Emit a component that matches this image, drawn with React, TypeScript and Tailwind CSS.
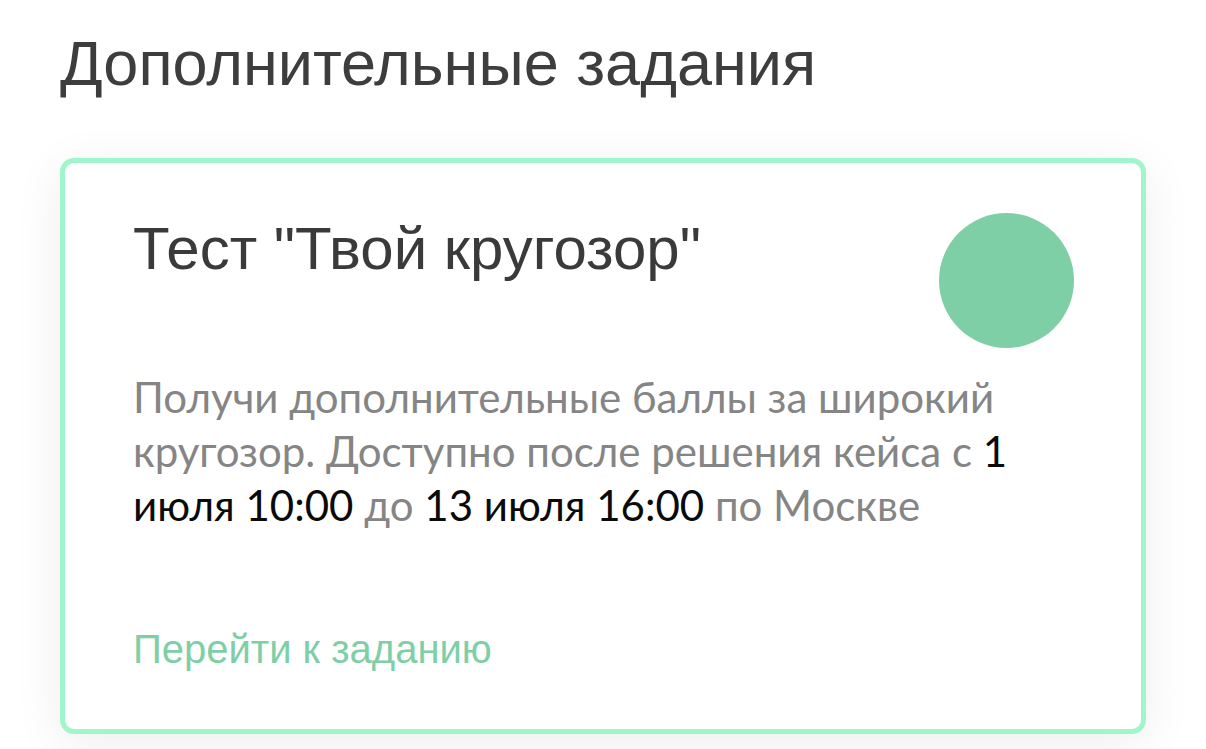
export default function App() {
  return (
    <div className="w-[1206px] h-[749px] overflow-hidden bg-white pl-[60px] pt-[26px]" style={{ fontFamily: '"Liberation Sans", Arial, sans-serif' }}>
      <h1 className="text-[63px] leading-[74px] text-[#3d3d3d] font-normal">Дополнительные задания</h1>
      <div className="mt-[58px] w-[1086px] h-[576px] rounded-[14px] border-[5px] border-[#a0f5cb] bg-white shadow-[0_10px_50px_rgba(0,0,0,0.07)] pt-[50px] pl-[68px] pr-[67px] flex flex-col">
        <div className="flex items-start justify-between">
          <div className="text-[60px] leading-[72px] text-[#3a3a3a]">Тест "Твой кругозор"</div>
          <div className="w-[135px] h-[135px] rounded-full bg-[#7ecfa5] shrink-0" />
        </div>
        <p className="mt-[22px] text-[42px] leading-[54px] text-[#858585] whitespace-nowrap" style={{ fontFamily: 'Lato, sans-serif' }}>
          Получи дополнительные баллы за широкий
          <br />
          кругозор. Доступно после решения кейса с <span className="text-[#0a0a0a]">1</span>
          <br />
          <span className="text-[#0a0a0a]">июля 10:00</span> до <span className="text-[#0a0a0a]">13 июля 16:00</span> по Москве
        </p>
        <a className="mt-[92px] text-[40px] leading-[50px] text-[#7fcfa6]">Перейти к заданию</a>
      </div>
    </div>
  );
}
